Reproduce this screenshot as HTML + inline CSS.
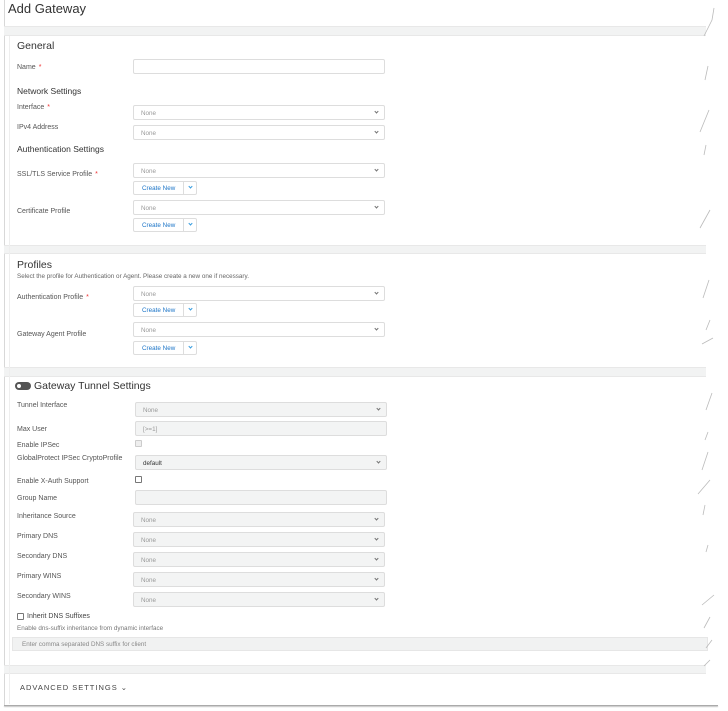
<!DOCTYPE html>
<html><head><meta charset="utf-8"><style>
*{box-sizing:border-box;margin:0;padding:0}
body{width:728px;height:711px;background:#fff;position:relative;overflow:hidden;font-family:"Liberation Sans",sans-serif;color:#333}
.a{position:absolute}
.band{position:absolute;left:4px;width:702px;background:#f2f3f3;border-top:1px solid #e8e8e8;border-bottom:1px solid #e8e8e8}
.lbl{position:absolute;left:17px;font-size:7px;color:#555;margin-top:1px}
.st{color:#e33;font-size:7px;margin-left:3px}
.h{position:absolute;left:17px;font-size:10.5px;color:#333}
.h2{position:absolute;left:17px;font-size:8.5px;color:#333}
.sel{position:absolute;left:133px;width:252px;height:15px;border:1px solid #ddd;border-radius:2px;background:#fff;font-size:6.3px;color:#999;padding:4px 0 0 7px}
.sel.g{background:#f3f4f4}
.sel .c{position:absolute;right:6px;top:4px;width:3px;height:3px;border-right:1px solid #777;border-bottom:1px solid #777;transform:rotate(45deg)}
.btn{position:absolute;left:133px;width:64px;height:14px;border:1px solid #ddd;border-radius:2px;background:#fff;font-size:6.3px;color:#1b74c7;padding:3px 0 0 8px}
.btn:after{content:"";position:absolute;left:49px;top:0;height:12px;border-left:1px solid #ddd}
.btn i{position:absolute;left:55px;top:3px;width:3px;height:3px;border-right:1px solid #3a9ee0;border-bottom:1px solid #3a9ee0;transform:rotate(45deg)}
.cb{position:absolute;width:7px;height:7px;border:1px solid #777;border-radius:1px;background:#fff}
</style></head><body>
<div class="a" style="left:4px;top:0;width:1px;height:706px;background:#d8d8d8"></div>
<div class="a" style="left:8px;top:1px;font-size:13px;color:#333">Add Gateway</div>
<div class="band" style="top:26px;height:10px"></div>
<div class="band" style="top:245px;height:9px"></div>
<div class="band" style="top:367px;height:10px"></div>
<div class="band" style="top:665px;height:9px"></div>
<div class="a" style="left:4px;top:705px;width:714px;height:1px;background:#aaa;box-shadow:0 1px 1px #bbb"></div>
<div class="a" style="left:9px;top:36px;width:1px;height:668px;background:#eee"></div>

<div class="h" style="top:40px">General</div>
<div class="lbl" style="top:63px">Name<span class="st">*</span></div>
<div class="sel" style="top:59px"></div>
<div class="h2" style="top:86px">Network Settings</div>
<div class="lbl" style="top:103px">Interface<span class="st">*</span></div>
<div class="sel" style="top:105px">None<i class="c"></i></div>
<div class="lbl" style="top:123px">IPv4 Address</div>
<div class="sel" style="top:125px">None<i class="c"></i></div>
<div class="h2" style="top:144px">Authentication Settings</div>
<div class="lbl" style="top:170px">SSL/TLS Service Profile<span class="st">*</span></div>
<div class="sel" style="top:163px">None<i class="c"></i></div>
<div class="btn" style="top:181px">Create New<i></i></div>
<div class="lbl" style="top:207px">Certificate Profile</div>
<div class="sel" style="top:200px">None<i class="c"></i></div>
<div class="btn" style="top:218px">Create New<i></i></div>

<div class="h" style="top:259px">Profiles</div>
<div class="lbl" style="top:272px;font-size:6.3px;color:#666">Select the profile for Authentication or Agent. Please create a new one if necessary.</div>
<div class="lbl" style="top:293px">Authentication Profile<span class="st">*</span></div>
<div class="sel" style="top:286px">None<i class="c"></i></div>
<div class="btn" style="top:303px">Create New<i></i></div>
<div class="lbl" style="top:330px">Gateway Agent Profile</div>
<div class="sel" style="top:322px">None<i class="c"></i></div>
<div class="btn" style="top:341px">Create New<i></i></div>

<div class="a" style="left:15px;top:382px;width:16px;height:8px;border-radius:4px;background:#555"></div>
<div class="a" style="left:16px;top:383px;width:6px;height:6px;border-radius:3px;background:#fff;border:1px solid #555"></div>
<div class="a" style="left:34px;top:380px;font-size:10.5px;color:#333">Gateway Tunnel Settings</div>
<div class="lbl" style="top:401px">Tunnel Interface</div>
<div class="sel g" style="top:402px;left:135px">None<i class="c"></i></div>
<div class="lbl" style="top:425px">Max User</div>
<div class="sel g" style="top:421px;left:135px">[>=1]</div>
<div class="lbl" style="top:441px">Enable IPSec</div>
<div class="cb" style="left:135px;top:440px;border-color:#ccc;background:#eee"></div>
<div class="lbl" style="top:454px">GlobalProtect IPSec CryptoProfile</div>
<div class="sel g" style="top:455px;left:135px;color:#333">default<i class="c"></i></div>
<div class="lbl" style="top:477px">Enable X-Auth Support</div>
<div class="cb" style="left:135px;top:476px"></div>
<div class="lbl" style="top:494px">Group Name</div>
<div class="sel g" style="top:490px;left:135px"></div>
<div class="lbl" style="top:512px">Inheritance Source</div>
<div class="sel g" style="top:512px">None<i class="c"></i></div>
<div class="lbl" style="top:532px">Primary DNS</div>
<div class="sel g" style="top:532px">None<i class="c"></i></div>
<div class="lbl" style="top:552px">Secondary DNS</div>
<div class="sel g" style="top:552px">None<i class="c"></i></div>
<div class="lbl" style="top:572px">Primary WINS</div>
<div class="sel g" style="top:572px">None<i class="c"></i></div>
<div class="lbl" style="top:592px">Secondary WINS</div>
<div class="sel g" style="top:592px">None<i class="c"></i></div>
<div class="cb" style="left:17px;top:613px"></div>
<div class="lbl" style="top:612px;left:27px;color:#444">Inherit DNS Suffixes</div>
<div class="lbl" style="top:624px;font-size:6.3px;color:#777">Enable dns-suffix inheritance from dynamic interface</div>
<div class="a" style="left:12px;top:637px;width:696px;height:14px;background:#f1f2f2;border:1px solid #e6e6e6;font-size:6.3px;color:#888;padding:3px 0 0 9px">Enter comma separated DNS suffix for client</div>
<div class="a" style="left:20px;top:683px;font-size:7.5px;letter-spacing:1px;color:#444">ADVANCED SETTINGS &#8964;</div>

<svg class="a" style="left:688px;top:0" width="40" height="711">
<g stroke="#bbb" stroke-width="0.8" fill="none">
<path d="M26 8 L24 20 L16 36 M20 66 L17 80 M21 110 L12 132 M18 145 L16 155 M22 210 L12 228 M21 280 L15 298 M22 320 L18 330 M25 338 L14 344 M24 393 L18 410 M20 432 L17 440 M20 452 L14 470 M22 480 L10 494 M17 505 L15 515 M20 545 L18 552 M26 595 L14 605 M22 617 L16 628 M24 640 L18 648 M22 660 L16 666"/>
</g></svg>
</body></html>
